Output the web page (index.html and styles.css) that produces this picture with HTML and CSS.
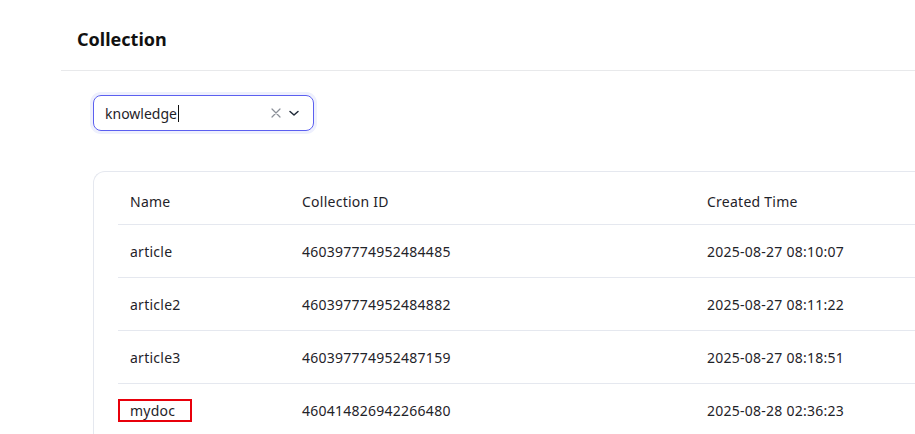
FILE: index.html
```html
<!DOCTYPE html>
<html>
<head>
<meta charset="utf-8">
<link rel="stylesheet" href="styles.css">
</head>
<body>
<div class="layout">
  <aside class="sidebar"></aside>
  <main class="main">
    <header class="page-header">
      <h1 class="title">Collection</h1>
    </header>
    <section class="content">
      <div class="select">
        <span class="select-value">knowledge<span class="caret"></span></span>
        <span class="select-icons">
          <svg class="icon-clear" width="12" height="12" viewBox="0 0 12 12"><path d="M2 2 L10 10 M10 2 L2 10" stroke="#8a8f98" stroke-width="1.2" fill="none" stroke-linecap="round"/></svg>
          <svg class="icon-chevron" width="14" height="14" viewBox="0 0 14 14"><path d="M3 5.5 L7 9 L11 5.5" stroke="#1f2937" stroke-width="1.5" fill="none" stroke-linecap="round" stroke-linejoin="round"/></svg>
        </span>
      </div>
      <div class="card">
        <table class="table">
          <thead>
            <tr><th class="c-name">Name</th><th class="c-id">Collection ID</th><th class="c-time">Created Time</th></tr>
          </thead>
          <tbody>
            <tr><td>article</td><td>460397774952484485</td><td>2025-08-27 08:10:07</td></tr>
            <tr><td>article2</td><td>460397774952484882</td><td>2025-08-27 08:11:22</td></tr>
            <tr><td>article3</td><td>460397774952487159</td><td>2025-08-27 08:18:51</td></tr>
            <tr><td><span class="highlight">mydoc</span></td><td>460414826942266480</td><td>2025-08-28 02:36:23</td></tr>
          </tbody>
        </table>
      </div>
    </section>
  </main>
</div>
</body>
</html>
```
FILE: styles.css
```css
html, body { margin: 0; padding: 0; background: #fff; }
body { font-family: "Noto Sans", "Open Sans", sans-serif; color: #1f2329; overflow: hidden; }
.layout { display: flex; width: 915px; height: 434px; overflow: hidden; }
.sidebar { width: 61px; flex: none; background: #fff; }
.main { flex: 1; min-width: 0; }
.page-header { height: 70px; border-bottom: 1px solid #e8e9eb; display: flex; align-items: center; padding-left: 16px; }
.title { margin: 0; font-size: 18px; font-weight: 700; color: #111; position: relative; top: 4px; }
.content { padding: 24px 0 0 32px; }
.select { height: 34px; border: 1px solid #5b5ff0; border-radius: 8px; box-shadow: 0 0 0 3px #eef0fd; display: flex; align-items: center; justify-content: space-between; padding: 0 12px 0 11px; box-sizing: content-box; width: 196px; }
.select-value { font-size: 14px; color: #1f2329; display: flex; align-items: center; }
.caret { display: inline-block; width: 1px; height: 17px; background: #111; margin-left: 1px; }
.select-icons { display: flex; align-items: center; gap: 5px; }
.card { margin-top: 40px; border: 1px solid #e5e8ef; border-right: none; border-radius: 12px 0 0 0; padding: 0 0 0 24px; height: 300px; }
.table { border-collapse: collapse; font-size: 14px; width: 798px; letter-spacing: 0.25px; }
.table th, .table td { text-align: left; font-weight: 400; padding: 0 12px; height: 52px; border-bottom: 1px solid #e5e8ef; color: #1f2329; white-space: nowrap; }
.table th { padding-top: 6px; height: 46px; }
.c-name { width: 148px; }
.c-id { width: 381px; }
.highlight { outline: 2px solid #e8000b; outline-offset: 0; padding: 0 15px 0 10px; margin-left: -10px; }
```
